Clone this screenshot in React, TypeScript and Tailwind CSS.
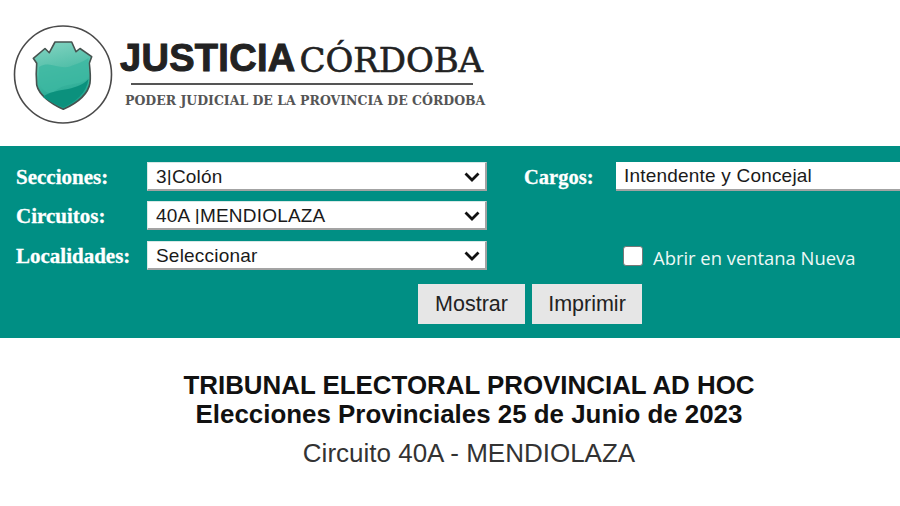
import React from 'react';

function Shield() {
  return (
    <svg width="100" height="100" viewBox="0 0 100 100" className="shrink-0">
      <defs>
        <linearGradient id="shieldFill" x1="0" y1="0" x2="0.2" y2="1">
          <stop offset="0" stopColor="#86d5c3" />
          <stop offset="0.45" stopColor="#55c0aa" />
          <stop offset="1" stopColor="#18a38d" />
        </linearGradient>
      </defs>
      <circle cx="50" cy="49.5" r="48.5" fill="#fff" stroke="#4a4a4a" strokeWidth="1.6" />
      <path
        d="M42 17 L58.7 17 L63 26.7 L67 23.5 L78.7 31.7 L76.3 38.3 C77.5 48 77.5 54 77 58 C75 70 62 79 50.3 84.3 C38 79 26 70 23.7 60 C23 52 23 46 23.7 38.3 L20.3 33.3 L32 23.5 L36.3 27.7 Z"
        fill="url(#shieldFill)"
        stroke="#46524f"
        strokeWidth="1.6"
        strokeLinejoin="round"
      />
      <path
        d="M26 42 C38 35 46 46 58 41 C66 38 72 36 75.5 33 L75.5 52 C68 62 54 56 42 66 C36 71 30 66 25.5 58 Z"
        fill="#3cb8a1"
        opacity="0.8"
      />
      <path d="M30 72 C42 62 62 68 75.5 54 C74 68 62 77 50.3 82.5 C42 79 35 76 30 72 Z" fill="#0b917d" />
    </svg>
  );
}

function Chevron() {
  return (
    <svg
      width="16"
      height="10"
      viewBox="0 0 16 10"
      fill="none"
      stroke="#111"
      strokeWidth="2.8"
      className="pointer-events-none absolute right-[7px] top-[10px]"
    >
      <path d="M1.5 1.5 L8 8 L14.5 1.5" />
    </svg>
  );
}

function Picker({ value }: { value: string }) {
  return (
    <div className="relative w-[340px] shrink-0">
      <select
        defaultValue={value}
        className="block h-[29px] w-full appearance-none rounded-none border-b-2 border-r-2 border-t border-l border-b-[#a3a3a3] border-r-[#a3a3a3] border-t-[#d8e8e6] border-l-[#d8e8e6] bg-white pl-[8px] pb-[4px] font-['Liberation_Sans',sans-serif] text-[19px] tracking-[0.2px] text-[#1a1a1a]"
      >
        <option>{value}</option>
      </select>
      <Chevron />
    </div>
  );
}

function FieldLabel({ children }: { children: React.ReactNode }) {
  return (
    <label className="h-[29px] w-[131px] shrink-0 font-['Liberation_Serif',serif] text-[21px] font-bold leading-[31px] text-white [-webkit-text-stroke:0.3px_#fff]">
      {children}
    </label>
  );
}

export default function App() {
  return (
    <div className="h-[506px] w-[900px] overflow-hidden bg-white">
      <header className="flex h-[146px] items-start pl-[13px] pt-[25px]">
        <Shield />
        <div className="ml-[7px] w-[370px] pt-[8px]">
          <div className="flex h-[44px] items-end whitespace-nowrap leading-none text-[#222]">
            <span className="font-['Liberation_Sans',sans-serif] text-[38px] font-bold tracking-[0.3px] [-webkit-text-stroke:1px_#222]">
              JUSTICIA
            </span>
            <span className="ml-[4px] font-['DejaVu_Serif',serif] text-[34px] tracking-[-0.1px] [-webkit-text-stroke:0.6px_#222]">CÓRDOBA</span>
          </div>
          <div className="ml-[11px] mt-[6px] h-[2px] w-[342px] bg-[#555]" />
          <div className="mt-[8px] ml-[5px] whitespace-nowrap font-['DejaVu_Serif',serif] text-[12.5px] font-bold leading-[15px] text-[#555]">
            PODER JUDICIAL DE LA PROVINCIA DE CÓRDOBA
          </div>
        </div>
      </header>

      <section className="h-[192px] bg-[#008f84] pl-[16px] pt-[16px]">
        <div className="flex items-start">
          <div className="flex w-[471px] shrink-0 flex-col">
            <div className="flex">
              <FieldLabel>Secciones:</FieldLabel>
              <Picker value="3|Colón" />
            </div>
            <div className="mt-[10px] flex">
              <FieldLabel>Circuitos:</FieldLabel>
              <Picker value="40A |MENDIOLAZA" />
            </div>
            <div className="mt-[11px] flex">
              <FieldLabel>Localidades:</FieldLabel>
              <Picker value="Seleccionar" />
            </div>
          </div>
          <div className="ml-[37px] flex h-[108px] flex-1 flex-col justify-between">
            <div className="flex">
              <label className="h-[29px] w-[92px] shrink-0 font-['Liberation_Serif',serif] text-[20.5px] font-bold leading-[31px] text-white [-webkit-text-stroke:0.3px_#fff]">
                Cargos:
              </label>
              <div className="h-[29px] w-[320px] shrink-0 border-b-2 border-[#a3a3a3] bg-white pl-[8px] font-['Liberation_Sans',sans-serif] text-[19px] leading-[27px] tracking-[0.2px] text-[#1a1a1a]">
                Intendente y Concejal
              </div>
            </div>
            <label className="ml-[99px] flex items-center">
              <input type="checkbox" className="h-[20px] w-[20px] appearance-none rounded-[3px] border border-[#777] bg-white" />
              <span className="ml-[10px] mt-[5px] whitespace-nowrap font-['Open_Sans',sans-serif] text-[18.4px] leading-[24px] text-[#eef8f6]">
                Abrir en ventana Nueva
              </span>
            </label>
          </div>
        </div>
        <div className="ml-[402px] mt-[14px] flex gap-[7px]">
          <button className="h-[40px] w-[107px] bg-[#e6e6e6] font-['Liberation_Sans',sans-serif] text-[21.5px] text-[#222]">Mostrar</button>
          <button className="h-[40px] w-[110px] bg-[#e6e6e6] font-['Liberation_Sans',sans-serif] text-[21.5px] text-[#222]">Imprimir</button>
        </div>
      </section>

      <section className="w-[938px] pt-[33px] text-center font-['Liberation_Sans',sans-serif]">
        <h1 className="text-[25.9px] font-bold leading-[29px] text-[#111]">TRIBUNAL ELECTORAL PROVINCIAL AD HOC</h1>
        <h2 className="text-[25.9px] font-bold leading-[29px] text-[#111]">Elecciones Provinciales 25 de Junio de 2023</h2>
        <p className="mt-[8px] text-[26px] leading-[32px] text-[#333]">Circuito 40A - MENDIOLAZA</p>
      </section>
    </div>
  );
}
